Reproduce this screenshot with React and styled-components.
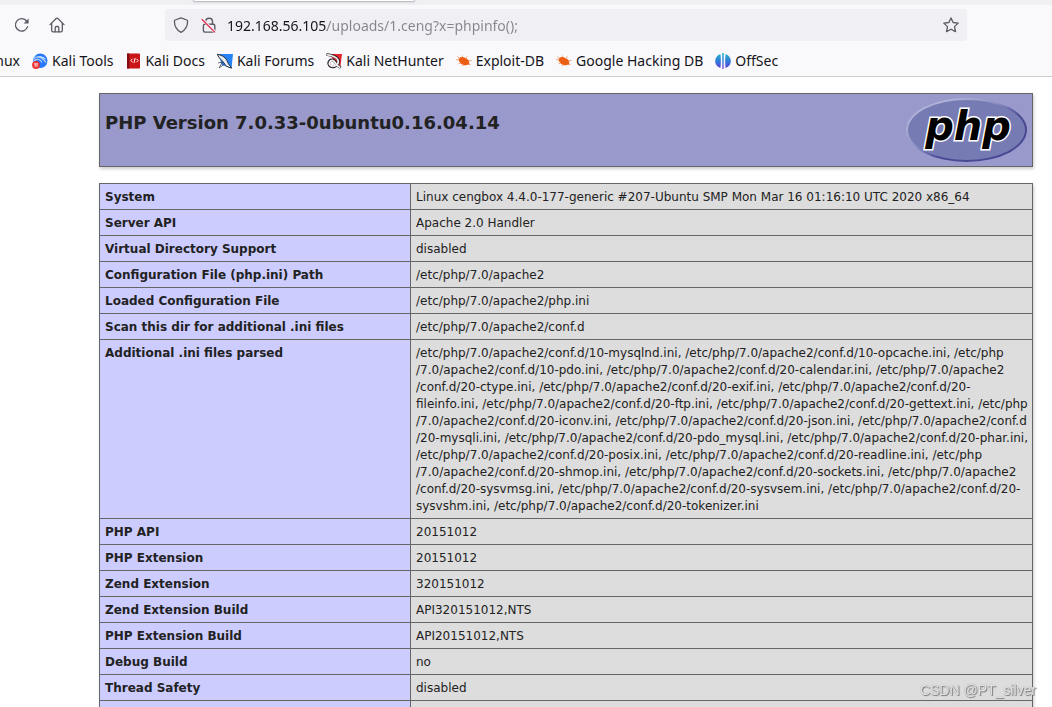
import React, { useState } from "react";
import styled, { createGlobalStyle } from "styled-components";

const GlobalStyle = createGlobalStyle`
  * {
    box-sizing: border-box;
  }

  body {
    margin: 0;
    background: #fff;
  }
`;

const Browser = styled.div`
  height: 100vh;
  overflow: hidden;
  display: flex;
  flex-direction: column;
  font-family: "Noto Sans", sans-serif;
  color: #15141a;
`;

const TabStrip = styled.div`
  flex: none;
  height: 5px;
  padding-left: 194px;
  background: #f0f0f4;
  overflow: hidden;
`;

const ActiveTab = styled.div`
  width: 220px;
  height: 1px;
  background: #fff;
  border-radius: 0 0 4px 4px;
  box-shadow: 0 0 2px 1px rgba(128, 128, 142, 0.6);
`;

const Toolbar = styled.div`
  flex: none;
  display: flex;
  align-items: center;
  height: 40px;
  padding: 0 85px 0 12px;
  background: #f9f9fb;
`;

const IconButton = styled.button`
  display: flex;
  flex: none;
  padding: 2px;
  border: 0;
  background: none;
  color: #5b5b66;

  svg {
    display: block;
  }
`;

const NavButtons = styled.div`
  display: flex;
  flex: none;
  gap: 15px;
  width: 153px;
`;

const UrlBar = styled.div`
  flex: 1;
  display: flex;
  align-items: center;
  gap: 8px;
  height: 32px;
  padding: 0 6px;
  background: #f0f0f4;
  border-radius: 4px;
`;

const UrlInput = styled.input`
  flex: 1;
  min-width: 0;
  height: 24px;
  padding: 0;
  border: 0;
  outline: 0;
  font-family: inherit;
  font-size: 14px;
  color: transparent;
  background: linear-gradient(90deg, #15141a 100px, #85858f 100px);
  -webkit-background-clip: text;
  background-clip: text;
`;

const Bookmarks = styled.nav`
  flex: none;
  display: flex;
  align-items: center;
  gap: 12px;
  height: 32px;
  background: #f9f9fb;
  border-bottom: 1px solid #ccc;
  overflow: hidden;
`;

const Bookmark = styled.a`
  display: flex;
  align-items: center;
  gap: 4px;
  font-size: 14px;
  line-height: 20px;
  white-space: nowrap;
  color: inherit;
  text-decoration: none;

  &:first-child {
    width: 20px;
    justify-content: flex-end;
  }

  svg {
    flex: none;
  }
`;

const Page = styled.main`
  flex: 1;
  min-height: 0;
  overflow: hidden;
  padding: 16px 19px 0 99px;
  font-family: "DejaVu Sans", sans-serif;
  color: #222;
`;

const Banner = styled.header`
  display: flex;
  justify-content: space-between;
  height: 74px;
  margin-bottom: 16px;
  padding: 4px 5px;
  background: #9999cc;
  border: 1px solid #666;
  box-shadow: 1px 2px 3px #ccc;
`;

const Title = styled.h1`
  margin: 14px 0 0;
  font-size: 18px;
  line-height: 21px;
`;

const InfoTable = styled.table`
  width: 100%;
  border-collapse: collapse;
  box-shadow: 1px 2px 3px #ccc;
  font-size: 12px;
  line-height: 17px;
`;

const Label = styled.th`
  width: 311px;
  height: 26px;
  padding: 5px 5px 3px;
  border: 1px solid #666;
  background: #ccccff;
  text-align: left;
  vertical-align: top;
`;

const Value = styled.td`
  padding: 5px 0 3px 5px;
  border: 1px solid #666;
  background: #ddd;
  vertical-align: top;
  white-space: pre;
`;

const Watermark = styled.div`
  position: fixed;
  right: 16px;
  bottom: 8px;
  font-family: "Liberation Sans", sans-serif;
  font-size: 14px;
  line-height: 18px;
  color: #e4e4e4;
  text-shadow: 1px 1px 1px #777, 0 0 1px #888;
`;

const ReloadIcon = () => (
  <svg width="16" height="16" viewBox="0 0 16 16" fill="none" stroke="currentColor" strokeWidth="1.3">
    <path d="M13.6 9.6A6.2 6.2 0 1 1 12.3 3.8L13.4 5" strokeLinecap="round" />
    <path d="M14.6 1.5v5h-5z" fill="currentColor" stroke="none" />
  </svg>
);

const HomeIcon = () => (
  <svg width="16" height="16" viewBox="0 0 16 16" fill="none" stroke="currentColor" strokeWidth="1.3" strokeLinejoin="round" strokeLinecap="round">
    <path d="M1 7.6 7.4 1.3q.6-.5 1.2 0L15 7.6" />
    <path d="M2.7 6.3v7.2q0 1.3 1.3 1.3h8q1.3 0 1.3-1.3V6.3" />
    <path d="M6.2 14.7v-4q0-1.2 1.2-1.2h1.2q1.2 0 1.2 1.2v4" />
  </svg>
);

const ShieldIcon = () => (
  <svg width="16" height="16" viewBox="0 0 16 16" fill="none" stroke="currentColor" strokeWidth="1.3" strokeLinejoin="round">
    <path d="M8 .9 13.9 3q.7.2.7 1C14.6 9 12.6 13 8 15.3 3.4 13 1.4 9 1.4 4q0-.8.7-1z" />
  </svg>
);

const InsecureIcon = () => (
  <svg width="16" height="16" viewBox="0 0 16 16" fill="none" stroke="currentColor" strokeWidth="1.4">
    <path d="M4.7 7V4.6a3.4 3.4 0 0 1 6.8 0V7" />
    <rect x="2.4" y="7.3" width="11.4" height="7.8" rx="1.5" />
    <path d="M.8 1.8 14.2 15.2" stroke="#f0f0f4" strokeWidth="3" />
    <path d="M.8 2.2 14 15.4" stroke="#e22850" strokeWidth="1.3" />
  </svg>
);

const StarIcon = () => (
  <svg width="16" height="16" viewBox="0 0 16 16" fill="none" stroke="currentColor" strokeWidth="1.3" strokeLinejoin="round">
    <path d="m8 .9 2.1 4.6 5.1.6-3.7 3.5 1 5L8 12.2l-4.5 2.4 1-5L.8 6.1l5.1-.6z" />
  </svg>
);

const ToolsIcon = () => (
  <svg width="16" height="16" viewBox="0 0 16 16">
    <circle cx="8.3" cy="7.8" r="7.2" fill="#2777ff" />
    <path d="M2 5.5C6 2.6 11 3 13.5 6.4M5.5 4.2c4.5-.6 6 2.4 8.6 5.4M1.5 8C5 5 9 6.5 10 9.5" fill="none" stroke="#bcd8ff" strokeWidth="1.1" />
    <circle cx="4" cy="12" r="3.9" fill="#e33" />
    <path d="M2 10.8h4M3.2 11v2.9M5 11v2.9" stroke="#fff" strokeWidth=".8" />
  </svg>
);

const DocsIcon = () => (
  <svg width="16" height="16" viewBox="-2 0 16 16">
    <rect y=".5" width="13" height="15" rx=".8" fill="#c91517" />
    <path d="M0 .5h2.2v15H0z" fill="#7d0d12" />
    <path d="M5.5 5.8 3.8 7.5l1.7 1.7M9.5 5.8l1.7 1.7-1.7 1.7M8.2 5 6.9 10" fill="none" stroke="#fff" />
  </svg>
);

const ForumsIcon = () => (
  <svg width="16" height="16" viewBox="0 0 16 16">
    <path d="M1 1h15L14.5 15.5 5 12z" fill="#2583f5" />
    <path d="M0 1.2C4 2 8 3.5 10 7.5c.8 2.5 2 4.5 4.8 7.5-4-.7-6.5-2-7.8-5C5.6 7.6 2.5 6 0 1.2z" fill="#e9edf2" stroke="#29303a" strokeWidth="1" />
    <path d="M1 10l4.5-1-3.5 6 5-3.5" fill="none" stroke="#29303a" strokeWidth=".7" />
  </svg>
);

const NetHunterIcon = () => (
  <svg width="16" height="16" viewBox="0 0 16 16">
    <path d="M3 1h13l-1.5 12L11 11z" fill="#e5242e" />
    <path d="M.5 1.4C6 2.2 13 4.5 12.6 9c-.4 4.2-6.6 6.2-9 3.5C1.6 10 3.4 6.5 6.5 7c2.3.4 3 2 5 5.5l3.2 2.2" fill="none" stroke="#252329" strokeWidth="2.8" />
    <path d="M1 1.6C6 2.4 12.6 4.8 12.3 9c-.4 3.7-6 5.4-8.2 3.2C2.4 10 4 7 6.5 7.4c2 .4 2.7 2 4.7 5.2l3 1.8" fill="none" stroke="#f3edef" strokeWidth="1.8" />
  </svg>
);

const BugIcon = () => (
  <svg width="16" height="16" viewBox="0 0 16 16">
    <path d="M3 5.2C5 3.3 8 4 10.4 5.6c2.2 1.2 3 2.6 2.7 4.6l1.4 1.9-2.2-.5C9.5 13.4 5.5 11.8 4 9.4 2.8 8 2.4 6.5 3 5.2z" fill="#ec5e13" />
    <path d="m3.5 5.5-2-2M3 7 .3 6.6M6 4.8l.5-2.3M9.8 5.5l1.5-2M12 8l3.6-.6M5 9.8l-2.4.9M7.5 11.5 6 13.2" stroke="#f08a50" strokeWidth=".8" />
  </svg>
);

const OffSecIcon = () => (
  <svg width="16" height="16" viewBox="0 0 16 16">
    <defs>
      <linearGradient id="offsec" x1="0" y1="0" x2="0" y2="1">
        <stop offset="0" stopColor="#1fb9c9" />
        <stop offset=".55" stopColor="#3476d8" />
        <stop offset="1" stopColor="#6331d8" />
      </linearGradient>
    </defs>
    <path d="M5.4.9q.9 7 0 14.2C-1.6 12.6-1.6 3.4 5.4.9zM10.6.9q-.9 7 0 14.2c7-2.5 7-11.7 0-14.2zM7.2 0h1.6l-.2 16H7.4z" fill="url(#offsec)" />
  </svg>
);

const PhpLogo = () => (
  <svg width="121" height="64" viewBox="0 0 121 64" role="img" aria-label="PHP logo">
    <defs>
      <linearGradient id="rim" x1="0" y1="0" x2="1" y2="1">
        <stop offset=".2" stopColor="#aeb2d8" />
        <stop offset=".42" stopColor="#8d91c4" />
        <stop offset=".6" stopColor="#484893" />
        <stop offset="1" stopColor="#484893" />
      </linearGradient>
    </defs>
    <ellipse cx="60.5" cy="32" rx="60.5" ry="32" fill="url(#rim)" />
    <ellipse cx="60.5" cy="32" rx="58.5" ry="30" fill="#777bb3" />
    <text
      x="62"
      y="42"
      textAnchor="middle"
      fontFamily="DejaVu Sans"
      fontSize="40"
      fontWeight="bold"
      fontStyle="italic"
      stroke="#fff"
      strokeWidth="3"
      paintOrder="stroke"
    >
      php
    </text>
  </svg>
);

const bookmarks = [
  { name: "nux" },
  { name: "Kali Tools", Icon: ToolsIcon },
  { name: "Kali Docs", Icon: DocsIcon },
  { name: "Kali Forums", Icon: ForumsIcon },
  { name: "Kali NetHunter", Icon: NetHunterIcon },
  { name: "Exploit-DB", Icon: BugIcon },
  { name: "Google Hacking DB", Icon: BugIcon },
  { name: "OffSec", Icon: OffSecIcon },
];

const iniFiles = `/etc/php/7.0/apache2/conf.d/10-mysqlnd.ini, /etc/php/7.0/apache2/conf.d/10-opcache.ini, /etc/php
/7.0/apache2/conf.d/10-pdo.ini, /etc/php/7.0/apache2/conf.d/20-calendar.ini, /etc/php/7.0/apache2
/conf.d/20-ctype.ini, /etc/php/7.0/apache2/conf.d/20-exif.ini, /etc/php/7.0/apache2/conf.d/20-
fileinfo.ini, /etc/php/7.0/apache2/conf.d/20-ftp.ini, /etc/php/7.0/apache2/conf.d/20-gettext.ini, /etc/php
/7.0/apache2/conf.d/20-iconv.ini, /etc/php/7.0/apache2/conf.d/20-json.ini, /etc/php/7.0/apache2/conf.d
/20-mysqli.ini, /etc/php/7.0/apache2/conf.d/20-pdo_mysql.ini, /etc/php/7.0/apache2/conf.d/20-phar.ini,
/etc/php/7.0/apache2/conf.d/20-posix.ini, /etc/php/7.0/apache2/conf.d/20-readline.ini, /etc/php
/7.0/apache2/conf.d/20-shmop.ini, /etc/php/7.0/apache2/conf.d/20-sockets.ini, /etc/php/7.0/apache2
/conf.d/20-sysvmsg.ini, /etc/php/7.0/apache2/conf.d/20-sysvsem.ini, /etc/php/7.0/apache2/conf.d/20-
sysvshm.ini, /etc/php/7.0/apache2/conf.d/20-tokenizer.ini`;

const rows = [
  ["System", "Linux cengbox 4.4.0-177-generic #207-Ubuntu SMP Mon Mar 16 01:16:10 UTC 2020 x86_64"],
  ["Server API", "Apache 2.0 Handler"],
  ["Virtual Directory Support", "disabled"],
  ["Configuration File (php.ini) Path", "/etc/php/7.0/apache2"],
  ["Loaded Configuration File", "/etc/php/7.0/apache2/php.ini"],
  ["Scan this dir for additional .ini files", "/etc/php/7.0/apache2/conf.d"],
  ["Additional .ini files parsed", iniFiles],
  ["PHP API", "20151012"],
  ["PHP Extension", "20151012"],
  ["Zend Extension", "320151012"],
  ["Zend Extension Build", "API320151012,NTS"],
  ["PHP Extension Build", "API20151012,NTS"],
  ["Debug Build", "no"],
  ["Thread Safety", "disabled"],
  ["", ""],
];

const App = () => {
  const [url, setUrl] = useState("192.168.56.105/uploads/1.ceng?x=phpinfo();");

  return (
    <Browser>
      <GlobalStyle />
      <TabStrip>
        <ActiveTab />
      </TabStrip>
      <Toolbar>
        <NavButtons>
          <IconButton aria-label="Reload">
            <ReloadIcon />
          </IconButton>
          <IconButton aria-label="Home">
            <HomeIcon />
          </IconButton>
        </NavButtons>
        <UrlBar>
          <IconButton aria-label="Tracking protection">
            <ShieldIcon />
          </IconButton>
          <IconButton aria-label="Connection is not secure">
            <InsecureIcon />
          </IconButton>
          <UrlInput
            aria-label="Address"
            spellCheck={false}
            value={url}
            onChange={e => setUrl(e.target.value)}
          />
          <IconButton aria-label="Bookmark this page">
            <StarIcon />
          </IconButton>
        </UrlBar>
      </Toolbar>
      <Bookmarks>
        {bookmarks.map(({ name, Icon }) => (
          <Bookmark key={name} href="#">
            {Icon && <Icon />}
            {name}
          </Bookmark>
        ))}
      </Bookmarks>
      <Page>
        <Banner>
          <Title>PHP Version 7.0.33-0ubuntu0.16.04.14</Title>
          <PhpLogo />
        </Banner>
        <InfoTable>
          <tbody>
            {rows.map(([label, value]) => (
              <tr key={label}>
                <Label scope="row">{label}</Label>
                <Value>{value}</Value>
              </tr>
            ))}
          </tbody>
        </InfoTable>
      </Page>
      <Watermark>CSDN @PT_silver</Watermark>
    </Browser>
  );
};

export default App;
